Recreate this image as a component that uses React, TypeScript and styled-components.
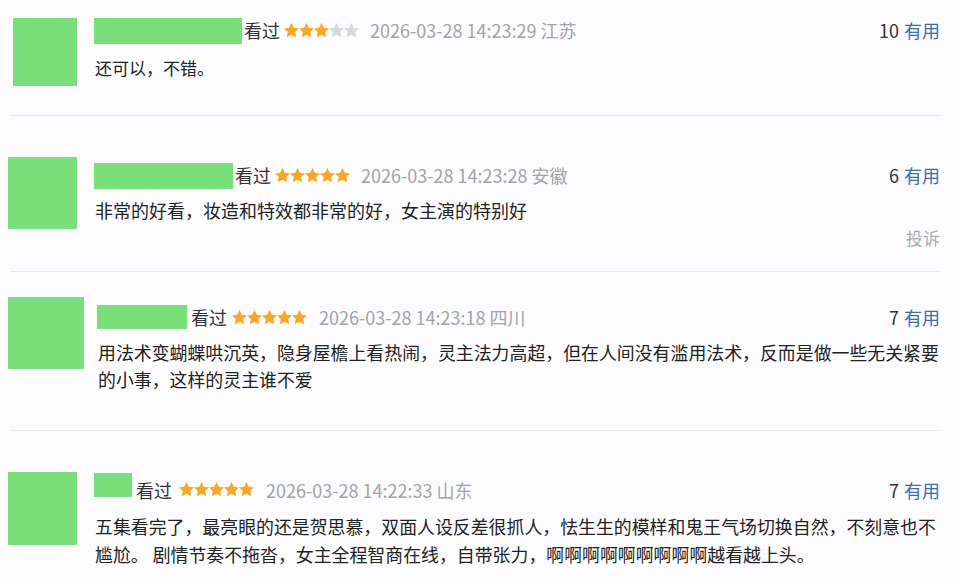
import React from "react";
import styled, { createGlobalStyle } from "styled-components";

const Global = createGlobalStyle`
  html, body { margin: 0; padding: 0; background: #fcfcfe; }
  body { font-family: "Noto Sans CJK SC", "Noto Sans", sans-serif; color: #222; }
`;

const Page = styled.div`
  width: 960px;
  height: 579px;
  overflow: hidden;
  background: #fcfcfe;
`;

const Section = styled.section<{ $pt: number; $pb: number }>`
  padding: ${(p) => p.$pt}px 20px ${(p) => p.$pb}px 0;
  display: flex;
  align-items: flex-start;
`;

const Divider = styled.div`
  height: 1px;
  margin: 0 20px 0 10px;
  background: #e9eaee;
`;

const Avatar = styled.div<{ $x: number; $w: number; $h: number }>`
  flex: none;
  margin-left: ${(p) => p.$x}px;
  width: ${(p) => p.$w}px;
  height: ${(p) => p.$h}px;
  background: #7adf79;
`;

const Body = styled.div<{ $left: number; $pt: number }>`
  flex: 1;
  margin-left: ${(p) => p.$left}px;
  padding-top: ${(p) => p.$pt}px;
  display: flex;
  flex-direction: column;
`;

const Header = styled.div<{ $shift: number }>`
  display: flex;
  align-items: center;
  font-size: 18px;
  line-height: 24px;
  white-space: nowrap;
  & > span {
    margin-top: ${(p) => p.$shift}px;
  }
`;

const NameBar = styled.div<{ $w: number; $h: number; $lift: number }>`
  flex: none;
  width: ${(p) => p.$w}px;
  height: ${(p) => p.$h}px;
  margin-bottom: ${(p) => p.$lift}px;
  background: #7adf79;
`;

const Watched = styled.span<{ $ml: number }>`
  margin-left: ${(p) => p.$ml}px;
  color: #333;
`;

const Stars = styled.span<{ $ml: number }>`
  display: inline-flex;
  margin-left: ${(p) => p.$ml}px;
`;

const DateText = styled.span<{ $ml: number }>`
  margin-left: ${(p) => p.$ml}px;
  color: #a3a3a8;
`;

const Votes = styled.span`
  margin-left: auto;
  color: #333;
`;

const Useful = styled.span`
  margin-left: 5px;
  color: #3c6eab;
`;

const Content = styled.p<{ $size: number; $mt: number; $lh: number }>`
  margin: ${(p) => p.$mt}px 0 0 1px;
  font-size: ${(p) => p.$size}px;
  line-height: ${(p) => p.$lh}px;
  color: #222;
`;

const Report = styled.div`
  margin-top: 3px;
  text-align: right;
  font-size: 17px;
  line-height: 22px;
  color: #aaaaae;
`;

const Star: React.FC<{ on: boolean }> = ({ on }) => (
  <svg width="15" height="15" viewBox="1.6 1.6 20.8 20.8">
    <path
      d="M12 1.5l3.2 6.6 7.2 1-5.2 5.1 1.3 7.2L12 18l-6.5 3.4 1.3-7.2L1.6 9.1l7.2-1z"
      fill={on ? "#f7a926" : "#d6d9dd"}
    />
  </svg>
);

type Review = {
  pt: number;
  pb: number;
  avatar: { x: number; w: number; h: number };
  bodyLeft: number;
  bodyPt: number;
  name: { w: number; h: number; lift: number };
  gaps: [number, number, number];
  shift: number;
  rating: number;
  date: string;
  votes: number;
  text: string;
  size: number;
  mt: number;
  lh: number;
  report?: boolean;
};

const reviews: Review[] = [
  {
    pt: 18, pb: 29,
    avatar: { x: 13, w: 64, h: 68 },
    bodyLeft: 17, bodyPt: 0,
    name: { w: 148, h: 26, lift: 0 },
    gaps: [2, 4, 11], shift: -2,
    rating: 3,
    date: "2026-03-28 14:23:29 江苏",
    votes: 10,
    text: "还可以，不错。",
    size: 17, mt: 10, lh: 27,
  },
  {
    pt: 41, pb: 22,
    avatar: { x: 8, w: 69, h: 72 },
    bodyLeft: 17, bodyPt: 6,
    name: { w: 139, h: 26, lift: 0 },
    gaps: [2, 4, 11], shift: -2,
    rating: 5,
    date: "2026-03-28 14:23:28 安徽",
    votes: 6,
    text: "非常的好看，妆造和特效都非常的好，女主演的特别好",
    size: 18, mt: 8, lh: 27,
    report: true,
  },
  {
    pt: 25, pb: 37,
    avatar: { x: 8, w: 76, h: 72 },
    bodyLeft: 13, bodyPt: 8,
    name: { w: 90, h: 24, lift: 0 },
    gaps: [4, 5, 12], shift: 0,
    rating: 5,
    date: "2026-03-28 14:23:18 四川",
    votes: 7,
    text: "用法术变蝴蝶哄沉英，隐身屋檐上看热闹，灵主法力高超，但在人间没有滥用法术，反而是做一些无关紧要的小事，这样的灵主谁不爱",
    size: 17.9, mt: 10, lh: 27,
  },
  {
    pt: 41, pb: 10,
    avatar: { x: 8, w: 69, h: 73 },
    bodyLeft: 17, bodyPt: 1,
    name: { w: 38, h: 24, lift: 10 },
    gaps: [4, 7, 12], shift: -1,
    rating: 5,
    date: "2026-03-28 14:22:33 山东",
    votes: 7,
    text: "五集看完了，最亮眼的还是贺思慕，双面人设反差很抓人，怯生生的模样和鬼王气场切换自然，不刻意也不尴尬。 剧情节奏不拖沓，女主全程智商在线，自带张力，啊啊啊啊啊啊啊啊啊越看越上头。",
    size: 17.9, mt: 5, lh: 28,
  },
];

export default function App() {
  return (
    <Page>
      <Global />
      {reviews.map((r, i) => (
        <React.Fragment key={i}>
          <Section $pt={r.pt} $pb={r.pb}>
            <Avatar $x={r.avatar.x} $w={r.avatar.w} $h={r.avatar.h} />
            <Body $left={r.bodyLeft} $pt={r.bodyPt}>
              <Header $shift={r.shift}>
                <NameBar $w={r.name.w} $h={r.name.h} $lift={r.name.lift} />
                <Watched $ml={r.gaps[0]}>看过</Watched>
                <Stars $ml={r.gaps[1]}>
                  {[0, 1, 2, 3, 4].map((s) => (
                    <Star key={s} on={s < r.rating} />
                  ))}
                </Stars>
                <DateText $ml={r.gaps[2]}>{r.date}</DateText>
                <Votes>
                  {r.votes}
                  <Useful>有用</Useful>
                </Votes>
              </Header>
              <Content $size={r.size} $mt={r.mt} $lh={r.lh}>
                {r.text}
              </Content>
              {r.report && <Report>投诉</Report>}
            </Body>
          </Section>
          {i < reviews.length - 1 && <Divider />}
        </React.Fragment>
      ))}
    </Page>
  );
}
